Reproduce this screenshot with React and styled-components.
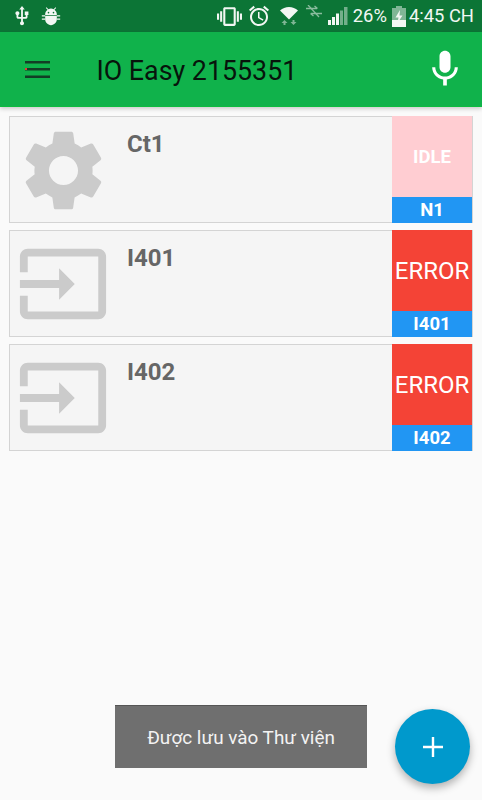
import React from "react";
import styled, { createGlobalStyle } from "styled-components";

const GlobalStyle = createGlobalStyle`
  html, body {
    margin: 0;
    padding: 0;
    background: #fafafa;
    font-family: Roboto, "Liberation Sans", sans-serif;
  }
`;

const items = [
  { id: 1, name: "Ct1", icon: "gear", status: "IDLE", tag: "N1" },
  { id: 2, name: "I401", icon: "input", status: "ERROR", tag: "I401" },
  { id: 3, name: "I402", icon: "input", status: "ERROR", tag: "I402" },
];

const GEAR =
  "M19.14 12.94c.04-.3.06-.61.06-.94 0-.32-.02-.64-.07-.94l2.03-1.58c.18-.14.23-.41.12-.61l-1.92-3.32c-.12-.22-.37-.29-.59-.22l-2.39.96c-.5-.38-1.03-.7-1.62-.94l-.36-2.54c-.04-.24-.24-.41-.48-.41h-3.84c-.24 0-.43.17-.47.41l-.36 2.54c-.59.24-1.13.57-1.62.94l-2.39-.96c-.22-.08-.47 0-.59.22L2.74 8.87c-.12.21-.08.47.12.61l2.03 1.58c-.05.3-.09.63-.09.94s.02.64.07.94l-2.03 1.58c-.18.14-.23.41-.12.61l1.92 3.32c.12.22.37.29.59.22l2.39-.96c.5.38 1.03.7 1.62.94l.36 2.54c.05.24.24.41.48.41h3.84c.24 0 .44-.17.47-.41l.36-2.54c.59-.24 1.13-.56 1.62-.94l2.39.96c.22.08.47 0 .59-.22l1.92-3.32c.12-.22.07-.47-.12-.61l-2.01-1.58zM12 15.6c-1.98 0-3.6-1.62-3.6-3.6s1.62-3.6 3.6-3.6 3.6 1.62 3.6 3.6-1.62 3.6-3.6 3.6z";
const INPUT =
  "M21 3.01H3c-1.1 0-2 .9-2 2V9h2V4.99h18v14.03H3V15H1v4.01c0 1.1.9 1.98 2 1.98h18c1.1 0 2-.88 2-1.98v-14c0-1.11-.9-2-2-2zM11 16l4-4-4-4v3H1v2h10v3z";

const Page = styled.div`
  position: relative;
  width: 482px;
  height: 800px;
  overflow: hidden;
  background: #fafafa;
`;

const StatusBar = styled.div`
  height: 32px;
  display: flex;
  align-items: center;
  padding: 0 8px 0 11px;
  box-sizing: border-box;
  background: #0c7536;
  color: #f2f7f3;
`;

const StatusLeft = styled.div`
  display: flex;
  align-items: center;
  gap: 8px;
`;

const StatusRight = styled.div`
  display: flex;
  align-items: center;
  margin-left: auto;
`;

const StatusIcon = styled.svg`
  display: block;
  flex: none;
  margin-left: ${(p) => p.$left || 0}px;
  fill: currentColor;
`;

const StatusText = styled.span`
  font-size: 18.4px;
  line-height: 32px;
  margin-left: ${(p) => p.$left || 0}px;
  white-space: nowrap;
`;

const AppBar = styled.header`
  height: 75px;
  display: flex;
  align-items: center;
  padding: 0 15px 0 25px;
  box-sizing: border-box;
  background: #10b24b;
  border-bottom: 1px solid #0dbb3f;
  box-shadow: 0 2px 4px rgba(0, 0, 0, 0.18);
`;

const MenuIcon = styled.svg`
  display: block;
  flex: none;
`;

const Title = styled.h1`
  margin: 3px 0 0 46.5px;
  font-size: 26.8px;
  font-weight: 400;
  line-height: 72px;
  color: #07140c;
  white-space: nowrap;
`;

const MicIcon = styled.svg`
  display: block;
  flex: none;
  margin-left: auto;
  fill: #fff;
`;

const List = styled.main`
  display: flex;
  flex-direction: column;
  gap: 7px;
  padding: 9px 9px 0;
`;

const Card = styled.article`
  height: 107px;
  display: flex;
  box-sizing: border-box;
  border: 1px solid #d4d4d4;
  background: #f5f5f5;
`;

const CardIcon = styled.svg`
  display: block;
  flex: none;
  margin: ${(p) => (p.$gear ? "4.5px 1.5px 0 4.5px" : "6px 3px 0 6px")};
  fill: #cbcbcb;
`;

const CardName = styled.div`
  margin: 11px 0 0 14px;
  font-size: 24px;
  font-weight: 700;
  line-height: 32px;
  color: #666;
`;

const Side = styled.div`
  margin: -1px 0 -1px auto;
  width: 80px;
  display: flex;
  flex-direction: column;
  flex: none;
`;

const Status = styled.div`
  height: 81px;
  display: flex;
  align-items: center;
  justify-content: center;
  font-size: ${(p) => (p.$error ? 24 : 18.5)}px;
  font-weight: ${(p) => (p.$error ? 400 : 700)};
  color: #fff;
  background: ${(p) => (p.$error ? "#f44336" : "#ffcdd2")};
`;

const Tag = styled.div`
  flex: 1;
  display: flex;
  align-items: center;
  justify-content: center;
  font-size: 18.5px;
  font-weight: 700;
  color: #fff;
  background: #2196f3;
`;

const Toast = styled.div`
  position: absolute;
  left: 115px;
  top: 705px;
  width: 252px;
  height: 63px;
  display: flex;
  align-items: center;
  justify-content: center;
  background: #6f6f6f;
  border-top: 1px solid #555;
  box-sizing: border-box;
  color: #f3f3f3;
  font-size: 18.9px;
`;

const Fab = styled.button`
  position: absolute;
  left: 395px;
  top: 709px;
  width: 75px;
  height: 75px;
  padding: 0;
  border: none;
  border-radius: 50%;
  display: flex;
  align-items: center;
  justify-content: center;
  background: #0099cc;
  box-shadow: 0 4px 8px rgba(0, 0, 0, 0.3);
`;

const App = () => {
  return (
    <Page>
      <GlobalStyle />
      <StatusBar>
        <StatusLeft>
          {/* usb */}
          <StatusIcon width="22" height="22" viewBox="0 0 24 24">
            <path d="M15 7v4h1v2h-3V5h2l-3-4-3 4h2v8H8v-2.07c.7-.37 1.2-1.08 1.2-1.93 0-1.21-.99-2.2-2.2-2.2-1.21 0-2.2.99-2.2 2.2 0 .85.5 1.56 1.2 1.93V13c0 1.11.89 2 2 2h3v3.05c-.71.37-1.2 1.1-1.2 1.95 0 1.22.99 2.2 2.2 2.2 1.21 0 2.2-.98 2.2-2.2 0-.85-.49-1.58-1.2-1.95V15h3c1.11 0 2-.89 2-2v-2h1V7h-4z" />
          </StatusIcon>
          {/* android debug */}
          <StatusIcon width="20" height="20" viewBox="0 0 24 24">
            <path d="M5 16c0 3.87 3.13 7 7 7s7-3.13 7-7v-4H5v4zM16.12 4.37l2.1-2.1-.82-.83-2.3 2.31C14.16 3.28 13.12 3 12 3s-2.16.28-3.09.75L6.6 1.44l-.82.83 2.1 2.1C6.14 5.64 5 7.68 5 10v1h14v-1c0-2.32-1.14-4.36-2.88-5.63zM9 9c-.55 0-1-.45-1-1s.45-1 1-1 1 .45 1 1-.45 1-1 1zm6 0c-.55 0-1-.45-1-1s.45-1 1-1 1 .45 1 1-.45 1-1 1z" />
            <path d="M1 11h4v1.6H1zM19 11h4v1.6h-4zM1 15h4v1.6H1zM19 15h4v1.6h-4z" />
          </StatusIcon>
        </StatusLeft>
        <StatusRight>
          {/* vibrate */}
          <StatusIcon width="25" height="25" viewBox="0 0 24 24">
            <path d="M0 15h2V9H0v6zm3 2h2V7H3v10zm19-8v6h2V9h-2zm-3 8h2V7h-2v10zM16.5 3h-9C6.67 3 6 3.67 6 4.5v15c0 .83.67 1.5 1.5 1.5h9c.83 0 1.5-.67 1.5-1.5v-15c0-.83-.67-1.5-1.5-1.5zM16 19H8V5h8v14z" />
          </StatusIcon>
          {/* alarm */}
          <StatusIcon $left={5} width="24" height="24" viewBox="0 0 24 24">
            <path d="M22 5.72l-4.6-3.86-1.29 1.53 4.6 3.86L22 5.72zM7.88 3.39L6.6 1.86 2 5.71l1.29 1.53 4.59-3.85zM12.5 8H11v6l4.75 2.85.75-1.23-4-2.37V8zM12 4c-4.97 0-9 4.03-9 9s4.03 9 9 9c4.97 0 9-4.03 9-9s-4.03-9-9-9zm0 16c-3.87 0-7-3.13-7-7s3.13-7 7-7 7 3.13 7 7-3.13 7-7 7z" />
          </StatusIcon>
          {/* wifi with data arrows */}
          <StatusIcon $left={9} width="18" height="18" viewBox="0 0 18 18">
            <path d="M0 3.5C2.5 1.3 5.6 0 9 0s6.5 1.3 9 3.5L9 12.5z" />
            <path opacity="0.5" d="M4.5 13l-3 3h2v2h2v-2h2zM13.5 18l3-3h-2v-2h-2v2h-2z" />
          </StatusIcon>
          {/* mobile data off */}
          <StatusIcon $left={7} width="18" height="22" viewBox="0 0 18 22">
            <g opacity="0.55" stroke="#f2f7f3" strokeWidth="1.3" fill="none">
              <path d="M1 3.5h11M9.5 1l3 2.5M17 8.5H6M8.5 11l-3-2.5" />
              <path d="M3 0l11 12" />
            </g>
          </StatusIcon>
          {/* signal */}
          <StatusIcon $left={5} width="20" height="18" viewBox="0 0 20 18">
            <path d="M0 13h3v5H0zM4 10h3v8H4zM8 6.5h3V18H8z" />
            <path opacity="0.45" d="M12 3.5h3V18h-3zM16 0h3.5v18H16z" />
          </StatusIcon>
          <StatusText $left={5}>26%</StatusText>
          {/* battery charging */}
          <StatusIcon $left={5} width="14" height="21" viewBox="0 0 14 21">
            <path opacity="0.5" d="M4 0h6v2h4v12H0V2h4z" />
            <path d="M0 14h14v7H0z" />
            <path d="M8 4L3.5 11.5H6.5L5.5 17L10.5 9.5H7.5z" />
          </StatusIcon>
          <StatusText $left={3}>4:45 CH</StatusText>
        </StatusRight>
      </StatusBar>

      <AppBar>
        <MenuIcon width="25" height="17" viewBox="0 0 25 17">
          <path fill="#123d25" d="M0 0h25v2.4H0zM0 7h25v2.4H0zM0 14.5h25v2.4H0z" />
          <path fill="#e53935" d="M0 7h2v2H0z" />
        </MenuIcon>
        <Title>IO Easy 2155351</Title>
        <MicIcon width="44" height="44" viewBox="0 0 24 24">
          <path d="M12 14c1.66 0 3-1.34 3-3V5c0-1.66-1.34-3-3-3S9 3.34 9 5v6c0 1.66 1.34 3 3 3zm5.3-3c0 3-2.54 5.1-5.3 5.1S6.7 14 6.7 11H5c0 3.41 2.72 6.23 6 6.72V21h2v-3.28c3.28-.48 6-3.3 6-6.72h-1.7z" />
        </MicIcon>
      </AppBar>

      <List>
        {items.map((item) => {
          const isGear = item.icon === "gear";
          return (
            <Card key={item.id}>
              <CardIcon
                $gear={isGear}
                width={isGear ? 97 : 94}
                height={isGear ? 97 : 94}
                viewBox="0 0 24 24"
              >
                <path d={isGear ? GEAR : INPUT} />
              </CardIcon>
              <CardName>{item.name}</CardName>
              <Side>
                <Status $error={item.status === "ERROR"}>{item.status}</Status>
                <Tag>{item.tag}</Tag>
              </Side>
            </Card>
          );
        })}
      </List>

      <Toast>Được lưu vào Thư viện</Toast>
      <Fab aria-label="add">
        <svg width="20" height="20" viewBox="0 0 20 20">
          <path fill="#fff" d="M8.8 0h2.4v8.8H20v2.4h-8.8V20H8.8v-8.8H0V8.8h8.8z" />
        </svg>
      </Fab>
    </Page>
  );
};

export default App;
